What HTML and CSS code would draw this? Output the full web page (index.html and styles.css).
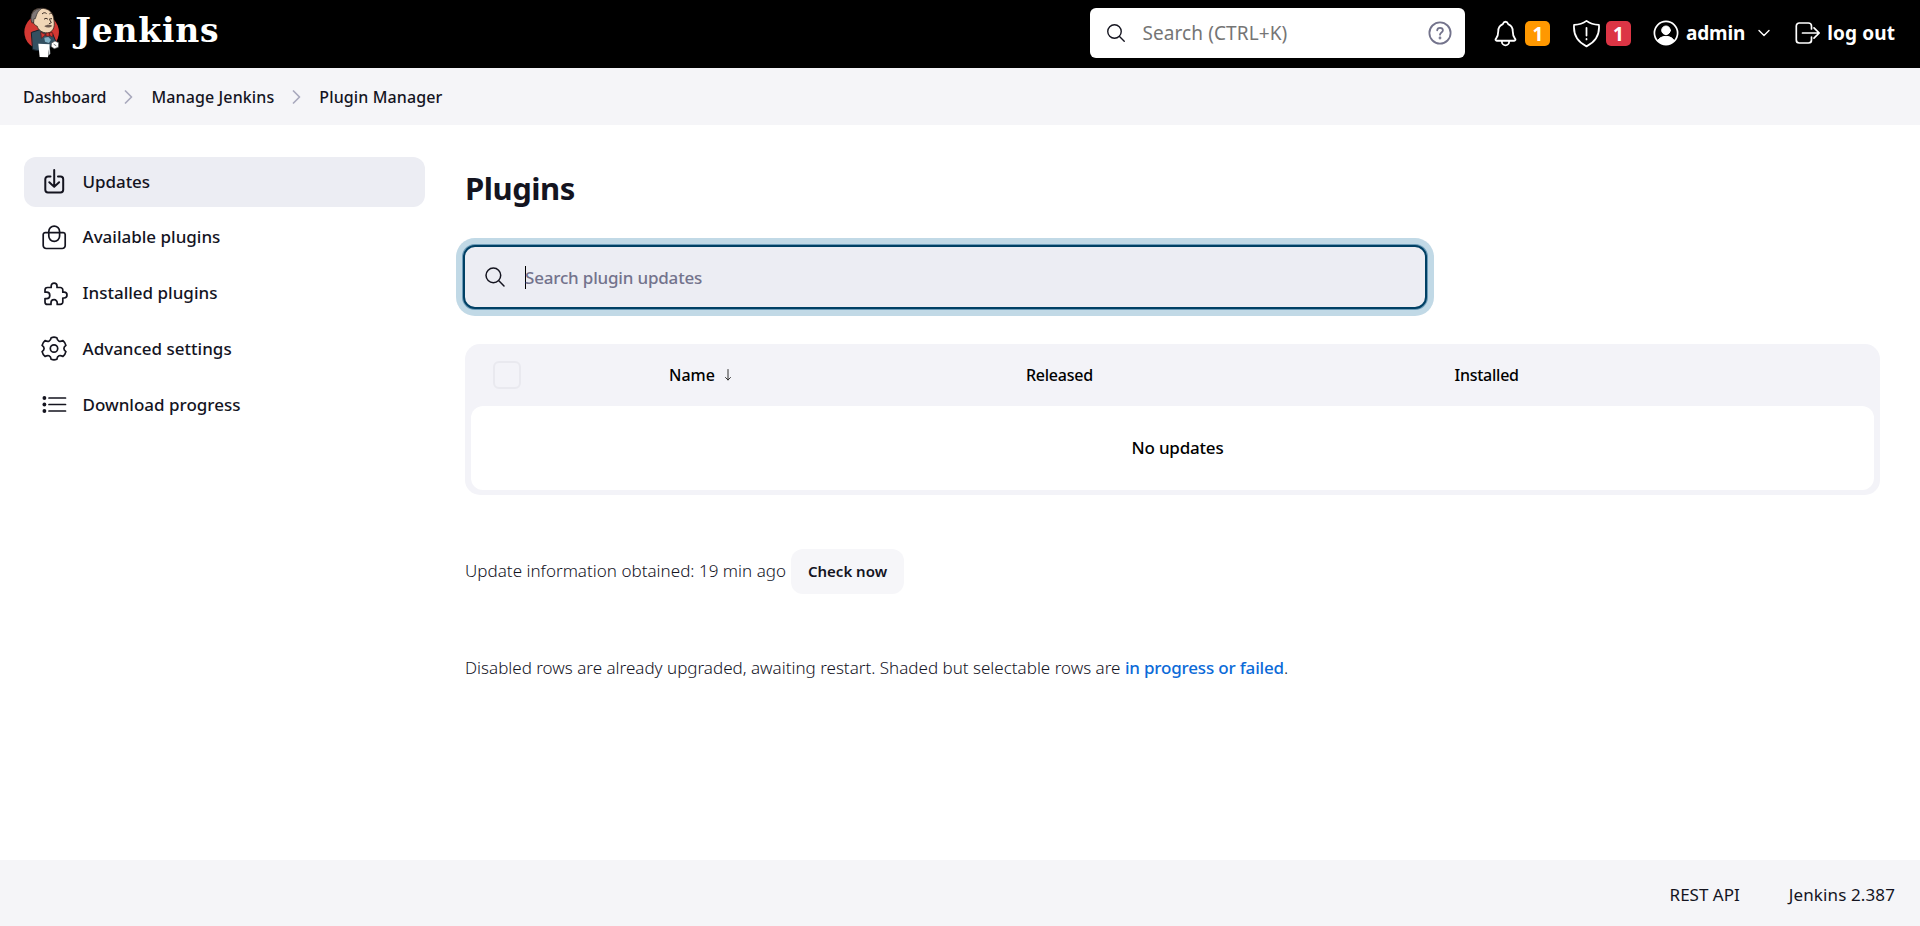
FILE: index.html
```html
<!DOCTYPE html>
<html lang="en">
<head>
<meta charset="utf-8">
<title>Plugins - Jenkins</title>
<link rel="stylesheet" href="styles.css">
</head>
<body>
<header class="header">
  <a class="brand">
    <svg class="mascot" viewBox="24 22 112 155">
      <circle cx="80" cy="97" r="52" fill="#d33833"/>
      <path d="M50 98l24-8 24 10 14 0 10 24-14 14-6 12-26 4-22-4z" fill="#335061" stroke="#14202a" stroke-width="3"/>
      <path d="M52 58c-8-18 6-32 24-32 26-2 40 14 41 36 4 22-4 36-20 38-16 0-28-10-30-20-8-2-14-12-15-22z" fill="#f0d6b7" stroke="#3a2a22" stroke-width="2.5"/>
      <path d="M50 68c-8-22 4-40 32-43-10 6-14 12-17 20l-4 12-4 0-1 12z" fill="#7f7776" stroke="#2b2524" stroke-width="2"/>
      <path d="M82 42c4-4 8-4 12-1M104 42c4-3 7-2 9 1M88 58c3-3 7-3 10 0M104 58l6-1M104 60l5 9-6 3" fill="none" stroke="#3a2a22" stroke-width="3"/>
      <path d="M88 80c6-5 16-6 24-2-4 6-16 8-24 2z" fill="#6d5a50"/>
      <path d="M78 98l14 7-12 10zM94 100h10v9H94zM106 98l8 2-2 12-9-6z" fill="#d33833" stroke="#6b1514" stroke-width="2"/>
      <path d="M88 114l12-2 8 8-6 10-12-4z" fill="#81b0c4"/>
      <path d="M70 132l34 2-5 39-25-1z" fill="#fff"/>
      <path d="M104 134l2 28-6 6z" fill="#c9ced1"/>
      <path d="M110 130l10-6 11 5-1 14-12 4-9-6z" fill="#fff" stroke="#555" stroke-width="2"/>
      <path d="M117 134l6 4" stroke="#333" stroke-width="2"/>
    </svg>
    <span class="wordmark">Jenkins</span>
  </a>
  <div class="search">
    <svg class="i22" viewBox="0 0 512 512"><path d="M221 64a157 157 0 10157 157A157 157 0 00221 64zM338 338l110 110" class="s32"/></svg>
    <span class="search-text">Search (CTRL+K)</span>
    <svg class="help" viewBox="0 0 24 24"><circle cx="12" cy="12" r="10.6"/><path d="M9.2 9.3C9.3 7.700 10.400 6.800 12 6.800C13.700 6.800 14.900 7.800 14.900 9.300C14.900 11.500 12 11.500 12 13.700"/><circle cx="12" cy="17" r=".5"/></svg>
  </div>
  <div class="alert">
    <svg class="i28" viewBox="0 0 512 512"><path class="s32" d="M427.680 351.430C402 320 383.870 304 383.870 217.350 383.870 138 343.350 109.730 310 96c-4.430-1.820-8.600-6-9.950-10.550C294.200 65.540 277.800 48 256 48s-38.210 17.550-44 37.470c-1.350 4.600-5.520 8.710-9.950 10.530-33.390 13.750-73.870 41.920-73.870 121.350C128.130 304 110 320 84.320 351.430 73.680 364.450 83 384 101.610 384h308.880c18.510 0 27.770-19.610 17.190-32.570zM320 384v16a64 64 0 01-128 0v-16"/></svg>
    <span class="badge orange">1</span>
  </div>
  <div class="alert shield">
    <svg class="i28" viewBox="0 0 28 28"><path class="s17" d="M14 1.800c3.500 2.600 7 3.600 12 3.800.8 9.200-3.200 16.600-12 20.800C5.200 22.200 1.200 14.800 2 5.600 7 5.400 10.500 4.400 14 1.800zM14 8.500v7.500M14 19.300v.4"/></svg>
    <span class="badge red">1</span>
  </div>
  <div class="user">
    <svg class="i26" viewBox="0 0 26 26"><clipPath id="disc"><circle cx="13" cy="13" r="11.500"/></clipPath><circle class="s17" cx="13" cy="13" r="11.600"/><circle cx="13" cy="10.300" r="4.300" fill="#fff"/><ellipse cx="13" cy="22.500" rx="8.600" ry="6.200" fill="#fff" clip-path="url(#disc)"/></svg>
    <span class="strong">admin</span>
    <svg class="chev" viewBox="0 0 12 8"><path d="M1 1.500l5 5 5-5"/></svg>
  </div>
  <div class="logout">
    <svg class="i26" viewBox="0 0 26 26"><path class="s17" d="M16.500 9V6a3 3 0 00-3-3H4.300a3 3 0 00-3 3v14a3 3 0 003 3h9.200a3 3 0 003-3v-3M7.500 13H24M19 7.800l5.200 5.200L19 18.200"/></svg>
    <span class="strong out">log out</span>
  </div>
</header>
<nav class="crumbs">
  <span class="c1">Dashboard</span>
  <svg class="sep" viewBox="0 0 9 14"><path d="M1.500 1l6 6-6 6"/></svg>
  <span>Manage Jenkins</span>
  <svg class="sep" viewBox="0 0 9 14"><path d="M1.500 1l6 6-6 6"/></svg>
  <span>Plugin Manager</span>
</nav>
<div class="page">
  <aside class="side">
    <a class="task active"><svg viewBox="0 0 26 26"><path d="M9.500 7.500H7A2.700 2.700 0 004.300 10.200V20.700A2.700 2.700 0 007 23.400H19.500A2.700 2.700 0 0022.200 20.700V10.200A2.700 2.700 0 0019.500 7.500H17M13.200 1V17.700M8.300 13.200l4.900 4.700L18.100 13.200" class="s2"/></svg><span class="t1">Updates</span></a>
    <a class="task"><svg viewBox="0 0 26 26"><path d="M4.300 7.700H22.300A2 2 0 0124.200 9.600V20.500A3 3 0 0121.200 23.500H5.200A3 3 0 012.200 20.500V9.600A2 2 0 014.300 7.700zM7.800 7.700V6.500a5.400 5.400 0 0110.800 0V11a5.400 5.400 0 01-10.800 0z"/></svg><span>Available plugins</span></a>
    <a class="task"><svg viewBox="0 0 27 26" class="wide"><path d="M4 9a2.500 2.500 0 012.500-2.500H10.200V5a2.900 2.900 0 015.800 0v1.500h3.300A2.500 2.500 0 0121.800 9v2.200h1.300a2.900 2.900 0 010 5.800h-1.300v3.900a2.500 2.500 0 01-2.500 2.500H16.200v-1.600a3.100 3.100 0 00-6.200 0v1.600H6.500A2.500 2.500 0 014 20.900v-3.300h1.600a3.200 3.200 0 000-6.400H4z"/></svg><span>Installed plugins</span></a>
    <a class="task"><svg viewBox="0 0 26 26"><circle cx="13" cy="12.500" r="3.700"/><path d="M10.200 1.700Q13 .7 15.800 1.700Q16.200 4.400 18 5.200Q19.600 5.800 22 4.600Q24.300 6.600 24.900 9.400Q22.900 11 22.900 12.500Q22.900 14 24.900 15.600Q24.300 18.400 22 20.400Q19.600 19.200 18 19.800Q16.200 20.600 15.800 23.300Q13 24.300 10.200 23.300Q9.800 20.600 8 19.800Q6.400 19.200 4 20.400Q1.700 18.400 1.100 15.600Q3.100 14 3.100 12.500Q3.100 11 1.100 9.400Q1.700 6.600 4 4.600Q6.400 5.800 8 5.200Q9.800 4.400 10.200 1.700z"/></svg><span>Advanced settings</span></a>
    <a class="task"><svg viewBox="0 0 26 26"><path d="M8 6h16.500M8 12.500h16.500M8 19h16.500"/><g class="dots"><circle cx="3.400" cy="6" r="1.900"/><circle cx="3.400" cy="12.500" r="1.900"/><circle cx="3.400" cy="19" r="1.900"/></g></svg><span>Download progress</span></a>
  </aside>
  <main class="main">
    <h1 class="title">Plugins</h1>
    <div class="filter">
      <svg class="i24" viewBox="0 0 512 512"><path d="M221 64a157 157 0 10157 157A157 157 0 00221 64zM338 338l110 110" class="s32"/></svg>
      <span class="caret"></span><span class="filter-text">Search plugin updates</span>
    </div>
    <section class="table">
      <div class="thead">
        <span class="check"></span>
        <span class="name">Name<svg class="arrow" viewBox="0 0 8 12"><path d="M4 .5v10.500M1.500 8.500l2.500 2.500 2.500-2.500"/></svg></span>
        <span class="tight">Released</span>
        <span class="tight">Installed</span>
      </div>
      <div class="tbody">No updates</div>
    </section>
    <div class="info"><span>Update information obtained: 19 min ago</span><button class="btn">Check now</button></div>
    <p class="note">Disabled rows are already upgraded, awaiting restart. Shaded but selectable rows are <a class="link">in progress or failed</a>.</p>
  </main>
</div>
<footer class="footer"><span>REST API</span><span class="ver">Jenkins 2.387</span></footer>
</body>
</html>
```
FILE: styles.css
```css
* { box-sizing: border-box; }
body { margin: 0; min-height: 926px; display: flex; flex-direction: column; background: #fff; color: #14141f; font-family: "Noto Sans", sans-serif; font-size: 17px; white-space: nowrap; }
svg { flex: none; display: block; fill: none; stroke-linecap: round; stroke-linejoin: round; }
.header { height: 68px; background: #000; color: #fff; display: flex; align-items: center; padding: 0 25px 2px 23px; }
.brand { display: flex; align-items: center; }
.mascot { width: 37.300px; height: 51.700px; }
.wordmark { margin-left: 15px; font: 700 33px/40px "DejaVu Serif", serif; margin-top: -4px; letter-spacing: .800px; }
.search { margin-left: auto; width: 375px; height: 50px; border-radius: 6px; background: #fff; display: flex; align-items: center; padding: 0 13px 0 15px; color: #14141f; }
.i22 { width: 22px; height: 22px; stroke: #14141f; }
.i24 { width: 24px; height: 24px; stroke: #14141f; }
.i26 { width: 26px; height: 26px; stroke: #fff; }
.i28 { width: 29px; height: 29px; stroke: #fff; }
.s32 { stroke-width: 32; }
.s17 { stroke-width: 1.700; }
.s2 { stroke-width: 2; }
.search-text { margin-left: 15px; font-size: 19px; color: #757575; letter-spacing: .1px; }
.help { width: 24px; height: 24px; margin-left: auto; stroke: #73738c; stroke-width: 1.800; }
.alert { display: flex; align-items: center; margin-left: 25.500px; gap: 5.500px; }
.shield { margin-left: 22px; gap: 4.500px; }
.badge { width: 25px; height: 25px; border-radius: 5px; font-size: 19px; font-weight: 700; line-height: 26px; text-align: center; }
.orange { background: #ff9800; }
.red { background: #dc3545; }
.user { display: flex; align-items: center; margin-left: 22px; }
.strong { font-size: 19px; font-weight: 700; letter-spacing: -.100px; margin-left: 7px; }
.chev { width: 12px; height: 8px; margin-left: 13px; stroke: #fff; stroke-width: 1.400; }
.logout { display: flex; align-items: center; margin-left: 25px; }
.logout .out { letter-spacing: .100px; margin-left: 6px; }
.crumbs { height: 57px; background: #f5f5f8; display: flex; align-items: center; padding: 0 23px; font-size: 16px; font-weight: 500; letter-spacing: .120px; }
.c1 { letter-spacing: -.050px; }
.sep { width: 9px; height: 14px; margin: 0 18px; stroke: #a9a9bd; stroke-width: 1.700; }
.page { flex: 1; display: flex; padding: 32px 40px 0 24px; gap: 40px; }
.side { width: 401px; display: flex; flex-direction: column; gap: 5.800px; }
.task { height: 50px; border-radius: 12px; display: flex; align-items: center; padding-left: 17px; gap: 15.500px; font-weight: 500; }
.task span { padding-bottom: 2px; }
.task.active { background: #ecedf3; }
.task svg { width: 26px; height: 26px; stroke: #14141f; stroke-width: 1.700; }
.task svg.wide { width: 27px; margin-right: -1px; }
.dots { fill: #14141f; stroke: none; }
.t1 { letter-spacing: -.050px; }
.main { flex: 1; min-width: 0; }
.title { margin: 7px 0 0; font-size: 31px; line-height: 48px; font-weight: 700; letter-spacing: -.500px; }
.filter { margin: 33px 0 0 -2px; width: 964px; height: 64px; border: 2px solid #004064; border-radius: 12px; background: #ecedf3; box-shadow: 0 0 0 1px #6b9bb8, 0 0 0 7px #c1d9e6; display: flex; align-items: center; padding-left: 18px; }
.caret { width: 1px; height: 23px; background: #000; margin-left: 18px; }
.filter-text { font-weight: 500; color: #73738c; letter-spacing: -.190px; margin-left: -1px; padding-top: 1px; }
.table { margin-top: 35px; height: 151px; border-radius: 15px; background: #f3f3f8; padding: 0 6px 5px; display: flex; flex-direction: column; color: #000; }
.thead { height: 62px; padding: 0 0 1px 22px; display: grid; grid-template-columns: 176px 357px 428.500px 1fr; align-items: center; font-size: 16px; font-weight: 500; }
.check { width: 28px; height: 28px; border: 2px solid #e9e9ef; border-radius: 6px; }
.name { display: flex; align-items: center; }
.arrow { width: 8px; height: 12px; margin-left: 9px; stroke: #333; stroke-width: 1; }
.tight { letter-spacing: -.250px; }
.tbody { flex: 1; background: #fff; border-radius: 12px; display: flex; align-items: center; justify-content: center; font-weight: 500; letter-spacing: -.200px; padding: 0 0 2px 10px; }
.info { margin-top: 54px; height: 45px; display: flex; align-items: center; gap: 5px; font-weight: 300; letter-spacing: .020px; }
.info span { padding-bottom: 2px; }
.btn { width: 113px; height: 45px; border: 0; border-radius: 12px; background: #f6f6f9; color: #14141f; font: 600 15px "Noto Sans", sans-serif; padding-bottom: 2px; }
.note { margin: 61px 0 0; line-height: 26px; font-weight: 300; letter-spacing: 0; }
.link { color: #0b6ad8; font-weight: 500; letter-spacing: -.180px; }
.footer { height: 66px; background: #f5f5f8; display: flex; align-items: center; justify-content: flex-end; gap: 49px; padding: 3px 25px 0 0; }
.ver { letter-spacing: .120px; }
```
